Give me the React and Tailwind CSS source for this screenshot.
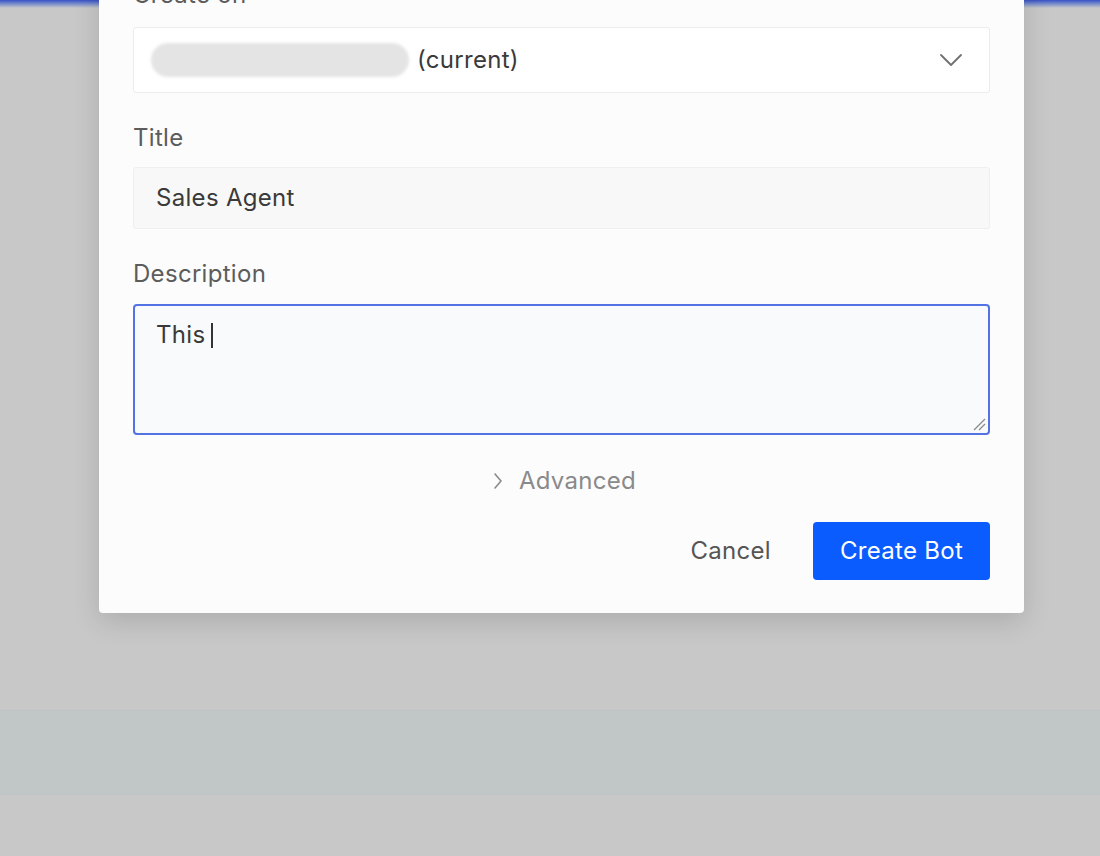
import React from 'react';

function ChevronDown() {
    return (
        <svg width="24" height="16" viewBox="0 0 24 16" fill="none" stroke="#707070" strokeWidth="1.8" strokeLinecap="round" strokeLinejoin="round">
            <polyline points="2,3 12,13 22,3" />
        </svg>
    );
}

function ChevronRight() {
    return (
        <svg width="10" height="18" viewBox="0 0 10 18" fill="none" stroke="#8a8a8a" strokeWidth="1.6" strokeLinecap="round" strokeLinejoin="round">
            <polyline points="2,2 8,9 2,16" />
        </svg>
    );
}

function ResizeHandle() {
    return (
        <svg width="14" height="14" viewBox="0 0 14 14" fill="none" stroke="#8a8a8a" strokeWidth="1.2">
            <line x1="2" y1="13" x2="13" y2="2" />
            <line x1="7" y1="13" x2="13" y2="7" />
        </svg>
    );
}

export default function App() {
    return (
        <div className="relative h-[856px] w-[1100px] overflow-hidden bg-[#c8c8c8] tracking-[0.3px]" style={{ fontFamily: 'Inter, "Noto Sans", sans-serif' }}>
            {/* Background page */}
            <div className="flex flex-col">
                <div className="h-[8px] bg-linear-to-b from-[#3a4fc6] to-[#c8c8c8]" />
                <div className="h-[702px]" />
                <div className="h-[85px] bg-[#c1c6c6] border-y border-[#bfc3c3]" />
            </div>

            {/* Dialog */}
            <div className="absolute left-[99px] top-[-45px] w-[925px] bg-[#fcfcfc] rounded-b-[4px] shadow-[0_8px_28px_rgba(0,0,0,0.14)] px-[34px] pt-[25px] pb-[33px]">
                <div className="text-[24px] leading-[30px] text-[#5c5c5c]">Create on</div>

                {/* Select */}
                <div className="mt-[17px] h-[66px] flex items-center justify-between border border-[#ececec] rounded-[3px] bg-white pl-[17px] pr-[26px]">
                    <div className="flex items-center gap-[8px]">
                        <div className="w-[258px] h-[34px] rounded-full bg-[#e4e4e4] blur-[1.5px]" />
                        <span className="text-[24px] text-[#3a3a3a]">(current)</span>
                    </div>
                    <ChevronDown />
                </div>

                <div className="mt-[30px] text-[24px] leading-[30px] text-[#5c5c5c]">Title</div>
                <div className="mt-[14px] h-[62px] flex items-center border border-[#efefef] rounded-[3px] bg-[#f8f8f8] px-[22px]">
                    <span className="text-[24px] text-[#3a3a3a]">Sales Agent</span>
                </div>

                <div className="mt-[30px] text-[24px] leading-[30px] text-[#5c5c5c]">Description</div>
                <div className="relative mt-[15px] h-[131px] border-2 border-[#5372e4] rounded-[4px] bg-[#f8fafb] px-[21px] pt-[14px]">
                    <div className="flex items-center">
                        <span className="text-[24px] leading-[30px] text-[#3a3a3a]">This</span>
                        <span className="ml-[6px] w-[2px] h-[25px] bg-[#333]" />
                    </div>
                    <div className="absolute right-[2px] bottom-[2px]">
                        <ResizeHandle />
                    </div>
                </div>

                <div className="mt-[31px] h-[30px] flex items-center justify-center gap-[16px] translate-x-[3px]">
                    <ChevronRight />
                    <span className="text-[24px] text-[#8a8a8a]">Advanced</span>
                </div>

                <div className="mt-[26px] flex items-center justify-end gap-[42px]">
                    <span className="text-[24px] text-[#555]">Cancel</span>
                    <button className="h-[58px] w-[177px] rounded-[4px] bg-[#0a5cff] text-white text-[24px] tracking-[0.3px]">Create Bot</button>
                </div>
            </div>
        </div>
    );
}
